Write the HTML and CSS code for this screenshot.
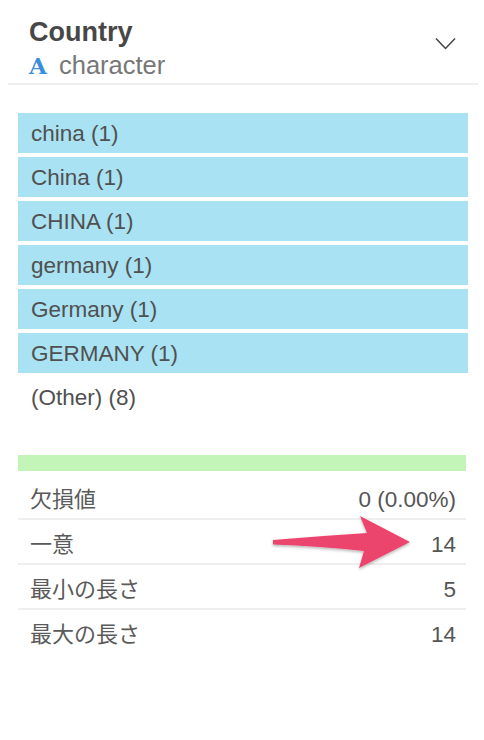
FILE: index.html
```html
<!DOCTYPE html>
<html lang="ja">
<head>
<meta charset="utf-8">
<link rel="stylesheet" href="styles.css">
</head>
<body>
<div class="panel">
  <div class="header">
    <div class="titles">
      <div class="title">Country</div>
      <div class="type"><span class="type-icon">A</span><span class="type-name">character</span></div>
    </div>
    <svg class="chevron" width="22" height="14" viewBox="0 0 22 14"><path d="M1 1.5 L10.5 11.5 L20 1.5" fill="none" stroke="#444" stroke-width="1.5"/></svg>
  </div>
  <div class="content">
    <ul class="values">
      <li class="value hit">china (1)</li>
      <li class="value hit">China (1)</li>
      <li class="value hit">CHINA (1)</li>
      <li class="value hit">germany (1)</li>
      <li class="value hit">Germany (1)</li>
      <li class="value hit">GERMANY (1)</li>
      <li class="value">(Other) (8)</li>
    </ul>
    <div class="bar"></div>
    <div class="stats">
      <div class="stat"><span class="label">欠損値</span><span class="num">0 (0.00%)</span></div>
      <div class="stat"><span class="label">一意</span><span class="num">14</span></div>
      <div class="stat"><span class="label">最小の長さ</span><span class="num">5</span></div>
      <div class="stat"><span class="label">最大の長さ</span><span class="num">14</span></div>
      <svg class="arrow" width="160" height="70" viewBox="263 510 160 70">
        <defs>
          <filter id="sh" x="-20%" y="-30%" width="140%" height="160%">
            <feDropShadow dx="0" dy="1.5" stdDeviation="1.5" flood-color="#000" flood-opacity="0.3"/>
          </filter>
        </defs>
        <path d="M273,541 Q320,537 367,534 L360,517 L410,543 L359,569 L364,552 Q320,547 273,545.5 Z" fill="#ec446d" filter="url(#sh)"/>
      </svg>
    </div>
  </div>
</div>
</body>
</html>
```
FILE: styles.css
```css
html, body {
  margin: 0;
  padding: 0;
  background: #fff;
}
body {
  font-family: "Liberation Sans", Arial, "Noto Sans CJK JP", sans-serif;
  color: #555;
}
.panel {
  margin: 0 6px 0 8px;
}
.header {
  display: flex;
  justify-content: space-between;
  align-items: flex-start;
  padding: 17px 21px 0 21px;
  height: 66px;
  border-bottom: 2px solid #efefef;
}
.title {
  font-size: 27px;
  font-weight: bold;
  color: #474747;
  line-height: 30px;
}
.type {
  display: flex;
  align-items: baseline;
  margin-top: 3px;
  line-height: 30px;
}
.type-icon {
  font-family: "DejaVu Serif", "Liberation Serif", serif;
  font-weight: bold;
  font-size: 23px;
  color: #3b8fd8;
  width: 30px;
}
.type-name {
  font-size: 25.5px;
  color: #777;
}
.chevron {
  margin-top: 20px;
}
.content {
  padding: 28px 10px 0 10px;
  position: relative;
}
.values {
  list-style: none;
  margin: 0;
  padding: 0;
  display: flex;
  flex-direction: column;
  gap: 4px;
}
.value {
  height: 40px;
  line-height: 41px;
  padding-left: 13px;
  font-size: 22.5px;
  color: #505050;
}
.value.hit {
  background: #a9e2f3;
}
.bar {
  margin-top: 38px;
  margin-right: 2px;
  height: 16px;
  background: #c3f4b8;
}
.stats {
  margin-top: 4px;
  margin-right: 2px;
  position: relative;
}
.stat {
  display: flex;
  justify-content: space-between;
  align-items: center;
  height: 43px;
  padding: 0 10px 0 12px;
  font-size: 22.5px;
  color: #555;
  border-bottom: 2px solid #efefef;
}
.stat:last-of-type {
  border-bottom: none;
}
.label {
  font-family: "Noto Sans CJK JP", sans-serif;
  font-size: 22px;
  line-height: 1;
  color: #5a5a5a;
}
.num {
  line-height: 1;
  margin-top: 8px;
}
.arrow {
  position: absolute;
  left: 245px;
  top: 34px;
}
```
